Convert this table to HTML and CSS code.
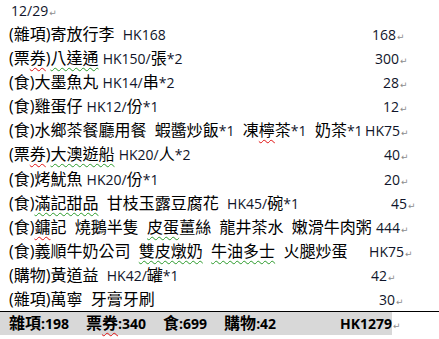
FILE: index.html
```html
<!DOCTYPE html>
<html lang="zh-Hant">
<head>
<meta charset="utf-8">
<title>12/29</title>
<link rel="stylesheet" href="styles.css">
</head>
<body>
<div class="doc">
  <div class="date"><span class="en">12/29</span><span class="pm">↵</span></div>

  <div class="row e396"><span class="txt">(雜項)寄放行李  <span class="en">HK168</span></span><span class="amt en">168</span><span class="pm">↵</span></div>
  <div class="row e399"><span class="txt">(票<span class="sp">券</span>)<span class="gr">八達通</span> <span class="en">HK150/</span>張<span class="en">*2</span></span><span class="amt en">300</span><span class="pm">↵</span></div>
  <div class="row e399"><span class="txt">(食)大墨魚丸 <span class="en">HK14/</span>串<span class="en">*2</span></span><span class="amt en">28</span><span class="pm">↵</span></div>
  <div class="row e399"><span class="txt">(食)雞蛋仔 <span class="en">HK12/</span>份<span class="en">*1</span></span><span class="amt en">12</span><span class="pm">↵</span></div>
  <div class="row"><span class="txt">(食)水鄉茶餐廳用餐  蝦醬炒飯<span class="en">*1</span>  凍<span class="sp">檸</span>茶<span class="en">*1</span>  奶茶<span class="en">*1</span></span><span class="amt en">HK75</span><span class="pm">↵</span></div>
  <div class="row"><span class="txt">(票<span class="sp">券</span>)<span class="gr">大澳遊船</span> <span class="en">HK20/</span>人<span class="en">*2</span></span><span class="amt en">40</span><span class="pm">↵</span></div>
  <div class="row"><span class="txt">(食)烤魷魚 <span class="en">HK20/</span>份<span class="en">*1</span></span><span class="amt en">20</span><span class="pm">↵</span></div>
  <div class="row e407"><span class="txt">(食)<span class="gr">滿記甜品</span>  甘枝玉露豆腐花  <span class="en">HK45/</span>碗<span class="en">*1</span></span><span class="amt en">45</span><span class="pm">↵</span></div>
  <div class="row"><span class="txt">(食)<span class="sp">鏞</span>記  燒鵝半隻  <span class="gr">皮蛋</span>薑絲  龍井茶水  嫩滑牛肉粥</span><span class="amt en">444</span><span class="pm">↵</span></div>
  <div class="row e404"><span class="txt">(食)義順牛奶公司  <span class="gr">雙皮燉奶</span>  <span class="gr">牛油多士</span>  火腿炒蛋</span><span class="amt en">HK75</span><span class="pm">↵</span></div>
  <div class="row e387"><span class="txt">(購物)黃道益  <span class="en">HK42/</span>罐<span class="en">*1</span></span><span class="amt en">42</span><span class="pm">↵</span></div>
  <div class="row e395"><span class="txt">(雜項)萬寧  牙膏牙刷</span><span class="amt en">30</span><span class="pm">↵</span></div>

  <div class="foot">
    <div class="band">
      <span class="tot">雜項<span class="en">:198</span></span>
      <span class="tot">票<span class="sp">券</span><span class="en">:340</span></span>
      <span class="tot">食<span class="en">:699</span></span>
      <span class="tot">購物<span class="en">:42</span></span>
      <span class="tot grand en">HK1279</span>
    </div>
    <span class="pm">↵</span>
  </div>
</div>
</body>
</html>
```
FILE: styles.css
```css
html, body {
  margin: 0;
  padding: 0;
  background: #ffffff;
}

body {
  width: 439px;
  height: 339px;
  overflow: hidden;
  font-family: "Open Sans", "Noto Sans CJK TC", sans-serif;
  font-size: 16px;
  color: #000000;
}

.doc {
  display: flex;
  flex-direction: column;
}

.en {
  font-family: "Open Sans", "Noto Sans CJK TC", sans-serif;
  font-size: 14px;
  color: #10152a;
}

.pm {
  font-family: "DejaVu Sans", sans-serif;
  font-size: 9px;
  color: #8c8c8c;
  width: 7px;
  display: inline-block;
  padding-left: 1px;
}

.date {
  height: 22px;
  line-height: 22px;
  padding-left: 11px;
  display: flex;
  align-items: baseline;
}

.row {
  height: 24.1px;
  line-height: 24.1px;
  padding-left: 9px;
  padding-right: 31px;
  display: flex;
  align-items: baseline;
  white-space: pre;
}

.row.e396 { padding-right: 35px; }
.row.e399 { padding-right: 32px; }
.row.e407 { padding-right: 24px; }
.row.e404 { padding-right: 27px; }
.row.e387 { padding-right: 44px; }
.row.e395 { padding-right: 36px; }

.txt {
  margin-right: auto;
}

.sp {
  text-decoration: underline wavy #e01010;
  text-decoration-thickness: 1px;
  text-underline-offset: 3px;
}

.gr {
  text-decoration: underline wavy #2a9a2a;
  text-decoration-thickness: 1px;
  text-underline-offset: 3px;
}

.foot {
  border-top: 1px solid #000000;
  display: flex;
  align-items: baseline;
  margin-top: 0;
}

.band {
  width: 392px;
  box-sizing: border-box;
  height: 23px;
  line-height: 23px;
  padding-left: 9px;
  background: #d8d8d8;
  display: flex;
  align-items: baseline;
  gap: 17px;
  font-weight: 700;
  white-space: pre;
}

.band .en {
  font-weight: 700;
  color: #000000;
}

.grand {
  margin-left: auto;
  font-weight: 700;
  color: #000000;
}
```
